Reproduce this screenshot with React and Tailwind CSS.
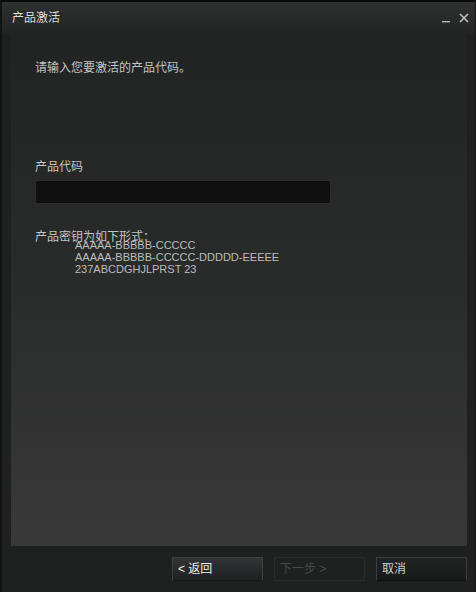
export default function App() {
  const font = { fontFamily: '"Liberation Sans", Arial, "Noto Sans CJK SC", sans-serif' };
  return (
    <div className="w-[476px] h-[592px] bg-[#1f2020] flex flex-col border-t-2 border-t-[#0b0b0b] border-l-2 border-l-[#121212] border-r border-r-[#161616]" style={font}>
      <div className="h-[32px] flex items-center justify-between pl-[10px] pr-[6px] bg-gradient-to-b from-[#2f3030] to-[#222323]">
        <span className="text-[12px] text-[#dcdcdc]">产品激活</span>
        <div className="flex items-center gap-[8px] text-[#b0b0b0]">
          <svg width="9" height="10" viewBox="0 0 9 10"><rect x="0" y="8" width="8" height="1.4" fill="#b5b5b5" /></svg>
          <svg width="10" height="10" viewBox="0 0 10 10"><path d="M1 1 L9 9 M9 1 L1 9" stroke="#c0c0c0" strokeWidth="1.6" /></svg>
        </div>
      </div>
      <div className="ml-[9px] mr-[8px] h-[512px] bg-gradient-to-b from-[#222323] via-[#2a2b2b] to-[#393939] pl-[24px] pt-[26px] text-[#c4c4c4] text-[12px]">
        <div className="leading-[16px]">请输入您要激活的产品代码。</div>
        <div className="mt-[83px] leading-[16px]">产品代码</div>
        <div className="mt-[5px] w-[296px] h-[24px] bg-[#101010] border border-[#2c2c2c]"></div>
        <div className="mt-[26px] leading-[14px]">产品密钥为如下形式：</div>
        <div className="-mt-[5px] pl-[40px] text-[11px] leading-[12px] text-[#bdbdbd]">
          <div>AAAAA-BBBBB-CCCCC</div>
          <div>AAAAA-BBBBB-CCCCC-DDDDD-EEEEE</div>
          <div>237ABCDGHJLPRST 23</div>
        </div>
      </div>
      <div className="flex justify-end gap-[11px] pr-[8px] mt-[11px]">
        <div className="w-[91px] h-[24px] border border-[#404040] border-b-[#1a1a1a] bg-gradient-to-b from-[#333435] to-[#1f2021] flex items-center pl-[5px] text-[12px] text-[#f0f0f0]">&lt; 返回</div>
        <div className="w-[91px] h-[24px] border border-[#2a2b2b] bg-[#1f2020] flex items-center pl-[5px] text-[12px] text-[#4a4a4a]">下一步 &gt;</div>
        <div className="w-[91px] h-[24px] border border-[#3c3c3c] border-b-[#111] bg-gradient-to-b from-[#222324] to-[#181919] flex items-center pl-[5px] text-[12px] text-[#d0d0d0]">取消</div>
      </div>
    </div>
  );
}
